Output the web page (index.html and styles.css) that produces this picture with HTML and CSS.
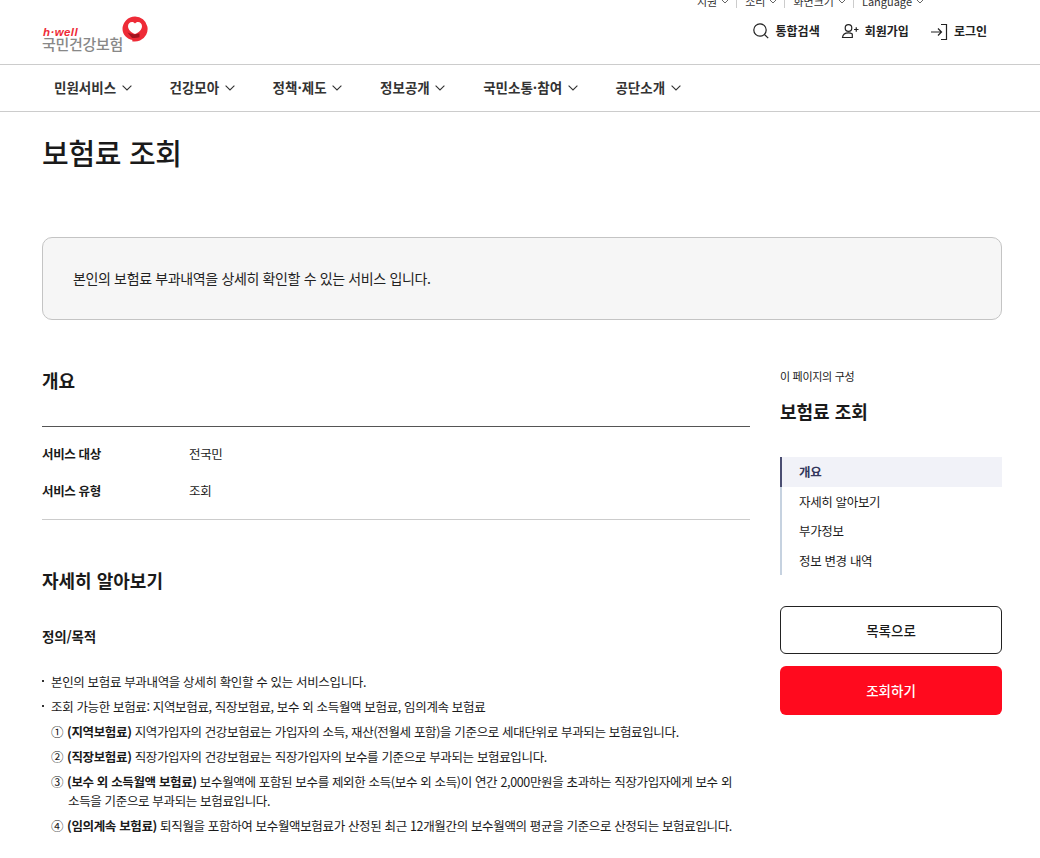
FILE: index.html
```html
<!DOCTYPE html>
<html lang="ko">
<head>
<meta charset="utf-8">
<title>보험료 조회</title>
<link rel="stylesheet" href="styles.css">
</head>
<body>
<header class="header">
  <div class="util">
    <span class="util-item">지원 <svg class="chev-s" viewBox="0 0 8 5"><path d="M.7.7 4 4l3.3-3.3"/></svg></span>
    <span class="util-item">소리 <svg class="chev-s" viewBox="0 0 8 5"><path d="M.7.7 4 4l3.3-3.3"/></svg></span>
    <span class="util-item">화면크기 <svg class="chev-s" viewBox="0 0 8 5"><path d="M.7.7 4 4l3.3-3.3"/></svg></span>
    <span class="util-item">Language <svg class="chev-s" viewBox="0 0 8 5"><path d="M.7.7 4 4l3.3-3.3"/></svg></span>
  </div>
  <div class="brand-row">
    <a class="logo">
      <span class="logo-text"><em class="logo-hwell">h·well</em><span class="logo-name">국민건강보험</span></span>
      <svg class="logo-mark" width="26" height="26" viewBox="0 0 26 26"><path d="M13 .5a12.500 12.500 0 0 1 5 24c-2.500 1-5 1.200-8 .8l.5-1.300C5 23 .5 18.500.5 13A12.500 12.500 0 0 1 13 .5z" fill="#ee2b37"/><path d="M13 18c-3.500-1.500-7-4-7-7.800C6 7.800 7.800 6 10 6c1.300 0 2.400.6 3 1.600C13.600 6.600 14.700 6 16 6c2.200 0 4 1.800 4 4.200C20 14 16.500 16.500 13 18z" fill="#fff"/><path d="M5.500 16.500c2.500 1.200 5 1.800 7.500 1.800l4.500-.8v3.800c-2.500.8-5 1-7.500.6z" fill="#a3141f"/></svg>
    </a>
    <nav class="member">
      <a class="member-link"><svg width="18" height="18" viewBox="0 0 18 18"><circle cx="8" cy="8" r="6.200"/><path d="m12.500 12.500 3.700 3.700"/></svg>통합검색</a>
      <a class="member-link"><svg width="18" height="18" viewBox="0 0 18 18"><circle cx="7.500" cy="6" r="3.300"/><path d="M1.500 15.500c.3-3 2.800-4.600 6-4.600 1.500 0 2.800.4 3.800 1.100v3.500zM13 7.500h4.500M15.250 5.300v4.500"/></svg>회원가입</a>
      <a class="member-link"><svg width="18" height="18" viewBox="0 0 18 18"><path d="M1 10h10.500M8 6.500 11.500 10 8 13.500M11 2.500h5.500v15H11"/></svg>로그인</a>
    </nav>
  </div>
</header>
<nav class="gnb">
  <a class="gnb-item">민원서비스<svg class="chev" viewBox="0 0 10 6"><path d="M.6.6 5 5 9.400.6"/></svg></a>
  <a class="gnb-item">건강모아<svg class="chev" viewBox="0 0 10 6"><path d="M.6.6 5 5 9.400.6"/></svg></a>
  <a class="gnb-item">정책·제도<svg class="chev" viewBox="0 0 10 6"><path d="M.6.6 5 5 9.400.6"/></svg></a>
  <a class="gnb-item">정보공개<svg class="chev" viewBox="0 0 10 6"><path d="M.6.6 5 5 9.400.6"/></svg></a>
  <a class="gnb-item">국민소통·참여<svg class="chev" viewBox="0 0 10 6"><path d="M.6.6 5 5 9.400.6"/></svg></a>
  <a class="gnb-item">공단소개<svg class="chev" viewBox="0 0 10 6"><path d="M.6.6 5 5 9.400.6"/></svg></a>
</nav>
<main class="page">
  <h1 class="title">보험료 조회</h1>
  <div class="summary">본인의 보험료 부과내역을 상세히 확인할 수 있는 서비스 입니다.</div>
  <div class="columns">
    <article class="content">
      <h2 class="section-title">개요</h2>
      <dl class="overview">
        <div class="overview-row"><dt>서비스 대상</dt><dd>전국민</dd></div>
        <div class="overview-row"><dt>서비스 유형</dt><dd>조회</dd></div>
      </dl>
      <h2 class="section-title detail-title">자세히 알아보기</h2>
      <h3 class="sub-title">정의/목적</h3>
      <ul class="bullets">
        <li>본인의 보험료 부과내역을 상세히 확인할 수 있는 서비스입니다.</li>
        <li>조회 가능한 보험료: 지역보험료, 직장보험료, 보수 외 소득월액 보험료, 임의계속 보험료</li>
      </ul>
      <ol class="circled">
        <li><span class="num">①</span><p><b>(지역보험료)</b> 지역가입자의 건강보험료는 가입자의 소득, 재산(전월세 포함)을 기준으로 세대단위로 부과되는 보험료입니다.</p></li>
        <li><span class="num">②</span><p><b>(직장보험료)</b> 직장가입자의 건강보험료는 직장가입자의 보수를 기준으로 부과되는 보험료입니다.</p></li>
        <li><span class="num">③</span><p><b>(보수 외 소득월액 보험료)</b> 보수월액에 포함된 보수를 제외한 소득(보수 외 소득)이 연간 2,000만원을 초과하는 직장가입자에게 보수 외 소득을 기준으로 부과되는 보험료입니다.</p></li>
        <li><span class="num">④</span><p><b>(임의계속 보험료)</b> 퇴직월을 포함하여 보수월액보험료가 산정된 최근 12개월간의 보수월액의 평균을 기준으로 산정되는 보험료입니다.</p></li>
      </ol>
    </article>
    <aside class="side">
      <p class="side-label">이 페이지의 구성</p>
      <p class="side-title">보험료 조회</p>
      <ul class="toc">
        <li class="toc-item is-active">개요</li>
        <li class="toc-item">자세히 알아보기</li>
        <li class="toc-item">부가정보</li>
        <li class="toc-item">정보 변경 내역</li>
      </ul>
      <a class="btn btn-line">목록으로</a>
      <a class="btn btn-red">조회하기</a>
    </aside>
  </div>
</main>
</body>
</html>
```
FILE: styles.css
```css
* { box-sizing: border-box; }
html, body { margin: 0; padding: 0; height: 858px; overflow: hidden; background: #fff; }
body { font-family: "Noto Sans CJK KR", "Noto Sans", sans-serif; color: #1a1a1a; font-size: 12.500px; letter-spacing: -.35px; }
p, h1, h2, h3, ul, ol, dl, dd { margin: 0; padding: 0; }
ul, ol { list-style: none; }

.header { height: 65px; border-bottom: 1px solid #ccc; padding: 0 38px 0 42px; }
.util { height: 8px; display: flex; justify-content: flex-end; padding-right: 71px; color: #333; font-size: 11px; line-height: 3px; letter-spacing: 0; }
.util-item { padding: 0 7px 5px 8px; border-left: 1px solid #ccc; display: flex; gap: 4px; align-items: center; white-space: nowrap; height: 8px; }
.util-item:first-child { border-left: 0; }
.chev-s { width: 8px; height: 5px; fill: none; stroke: #666; stroke-width: 1; }

.brand-row { display: flex; justify-content: space-between; align-items: flex-start; height: 56px; }
.logo { display: flex; align-items: flex-start; padding-top: 8px; }
.logo-text { display: flex; flex-direction: column; padding-top: 11px; }
.logo-hwell { font-family: "Liberation Sans", sans-serif; font-weight: 700; font-style: italic; font-size: 11.500px; line-height: 11px; color: #ee2b37; letter-spacing: .4px; padding-left: 1px; }
.logo-name { font-size: 15px; line-height: 12px; font-weight: 500; color: #888; white-space: nowrap; letter-spacing: -.3px; }
.logo-mark { margin-left: -1px; }

.member { display: flex; gap: 21px; padding-top: 13px; padding-right: 15px; }
.member-link { display: flex; align-items: center; gap: 6px; font-size: 12px; font-weight: 700; line-height: 20px; color: #222; letter-spacing: 0; }
.member-link svg { fill: none; stroke: #222; stroke-width: 1.200; }

.gnb { height: 47px; border-bottom: 1px solid #ccc; display: flex; align-items: center; padding: 0 0 2px 54px; gap: 37.900px; }
.gnb-item { display: flex; align-items: center; font-size: 13.500px; font-weight: 700; color: #333; white-space: nowrap; letter-spacing: 0; }
.chev { width: 10px; height: 6px; margin: 2px 0 0 5.500px; fill: none; stroke: #333; stroke-width: 1.100; }

.page { padding: 0 38px 0 42px; }
.title { font-size: 29px; line-height: 44px; font-weight: 500; padding-top: 18px; height: 125px; letter-spacing: -.3px; }
.summary { height: 83px; border: 1px solid #c4c4c4; border-radius: 10px; background: #f6f6f6; padding: 0 0 2px 30px; display: flex; align-items: center; font-size: 14px; color: #222; letter-spacing: -.36px; }
.columns { display: flex; justify-content: space-between; padding-top: 46px; }
.content { width: 708px; }
.section-title { font-size: 18px; line-height: 28px; font-weight: 700; letter-spacing: 0; }
.overview { margin-top: 32px; border-top: 1px solid #555; border-bottom: 1px solid #ccc; padding: 8px 0 10px; }
.overview-row { display: flex; height: 37px; align-items: center; }
.overview-row dt { width: 147px; font-weight: 700; }
.detail-title { margin-top: 46px; }
.sub-title { font-size: 13.500px; line-height: 20px; font-weight: 700; margin-top: 32px; letter-spacing: -.2px; }
.bullets { margin-top: 23px; }
.bullets li { position: relative; padding-left: 9px; line-height: 25px; }
.bullets li::before { content: ""; position: absolute; left: 0; top: 11px; width: 2px; height: 2px; background: #333; }
.circled { padding-left: 9px; }
.circled li { display: flex; line-height: 19px; padding: 3px 12px 3px 0; }
.circled p { text-indent: -1px; }
.num { width: 17px; flex: none; }
.circled b { font-weight: 700; }
.side { width: 222px; }
.side-label { font-size: 11px; line-height: 16px; margin-top: 2px; letter-spacing: -.3px; }
.side-title { font-size: 18px; line-height: 28px; font-weight: 700; margin-top: 13px; letter-spacing: 0; }
.toc { margin-top: 32px; border-left: 2px solid #c6d2e0; }
.toc-item { height: 29.500px; display: flex; align-items: center; padding-left: 17px; }
.is-active { background: #f1f2f8; font-weight: 700; color: #33375c; box-shadow: -2px 0 0 #4a4e72; }
.btn { display: flex; align-items: center; justify-content: center; height: 48px; border-radius: 6px; font-size: 13.500px; font-weight: 500; letter-spacing: 0; }
.btn-line { margin-top: 31px; border: 1px solid #222; }
.btn-red { margin-top: 12px; height: 49px; background: #ff0a1e; color: #fff; padding-bottom: 2px; }
```
